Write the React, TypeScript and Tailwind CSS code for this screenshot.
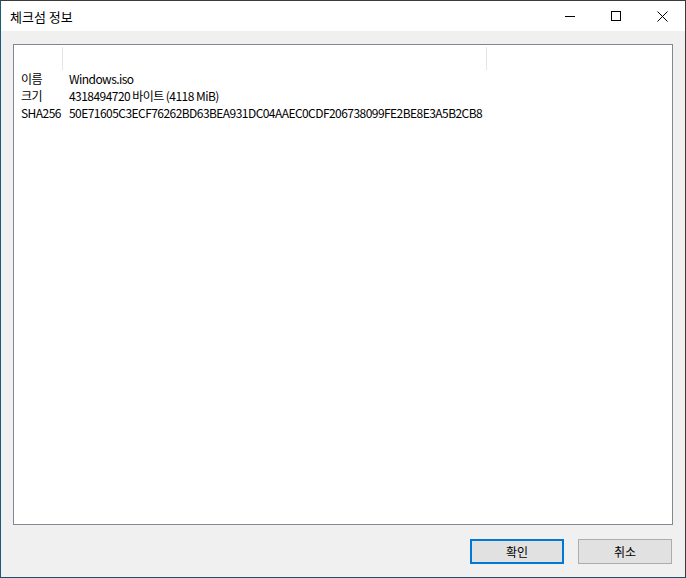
import React from "react";

const FONT = { fontFamily: '"Noto Sans CJK KR", "Noto Sans", sans-serif' };

function Row({ label, value }: { label: string; value: string }) {
  return (
    <div className="flex h-[17px] items-center text-[12px] text-black leading-none tracking-[-0.55px]">
      <div className="w-[48px] pl-[7px] whitespace-nowrap">{label}</div>
      <div className="pl-[7px] whitespace-nowrap">{value}</div>
    </div>
  );
}

export default function App() {
  return (
    <div
      className="w-[686px] h-[578px] flex flex-col border border-[#3a3a3a] border-l-[#1c5a75] border-b-[#1f4f66] bg-[#f0f0f0] overflow-hidden"
      style={FONT}
    >
      {/* Title bar */}
      <div className="h-[30px] bg-white flex items-center shrink-0">
        <div className="pl-[9px] text-[13px] text-black leading-none flex-1">체크섬 정보</div>
        <div className="flex h-full">
          <div className="w-[46px] h-full flex items-center justify-center">
            <svg width="10" height="10" viewBox="0 0 10 10">
              <line x1="0" y1="5.5" x2="10" y2="5.5" stroke="#000" strokeWidth="1" />
            </svg>
          </div>
          <div className="w-[46px] h-full flex items-center justify-center">
            <svg width="10" height="10" viewBox="0 0 10 10">
              <rect x="0.5" y="0.5" width="9" height="9" fill="none" stroke="#000" strokeWidth="1" />
            </svg>
          </div>
          <div className="w-[46px] h-full flex items-center justify-center">
            <svg width="11" height="11" viewBox="0 0 11 11">
              <line x1="0.5" y1="0.5" x2="10.5" y2="10.5" stroke="#000" strokeWidth="1" />
              <line x1="10.5" y1="0.5" x2="0.5" y2="10.5" stroke="#000" strokeWidth="1" />
            </svg>
          </div>
        </div>
      </div>

      {/* Body */}
      <div className="flex-1 flex flex-col pt-[13px] px-[12px]">
        <div className="h-[481px] border border-[#828790] bg-white flex flex-col">
          <div className="h-[25px] flex shrink-0">
            <div className="w-[48px] h-full"></div>
            <div className="w-px h-[23px] mt-[2px] bg-[#e5e5e5]"></div>
            <div className="w-[423px] h-full"></div>
            <div className="w-px h-[23px] mt-[2px] bg-[#e5e5e5]"></div>
          </div>
          <Row label="이름" value="Windows.iso" />
          <Row label="크기" value="4318494720 바이트 (4118 MiB)" />
          <Row label="SHA256" value="50E71605C3ECF76262BD63BEA931DC04AAEC0CDF206738099FE2BE8E3A5B2CB8" />
        </div>

        <div className="flex justify-end gap-[14px] mt-[14px] pr-px">
          <button className="w-[94px] h-[25px] border-2 border-[#0078d7] bg-[#e1e1e1] text-[12px] text-black leading-none flex items-center justify-center">
            확인
          </button>
          <button className="w-[94px] h-[25px] border border-[#adadad] bg-[#e1e1e1] text-[12px] text-black leading-none flex items-center justify-center">
            취소
          </button>
        </div>
      </div>
    </div>
  );
}
